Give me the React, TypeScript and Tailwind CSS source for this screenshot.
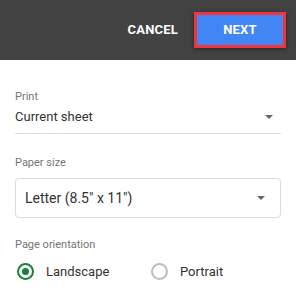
import React from "react";

function Caret() {
  return (
    <svg width="8" height="4" viewBox="0 0 8 4" className="shrink-0">
      <path d="M0 0h8L4 4z" fill="#666" />
    </svg>
  );
}

function Radio({ checked, label }: { checked: boolean; label: string }) {
  return (
    <div className="flex items-center">
      <div
        className={
          checked
            ? "flex h-[17px] w-[17px] items-center justify-center rounded-full border-2 border-[#188038]"
            : "h-[17px] w-[17px] rounded-full border-2 border-[#bdbdbd]"
        }
      >
        {checked && <div className="h-[7px] w-[7px] rounded-full bg-[#188038]" />}
      </div>
      <span className="ml-[12px] text-[13px] text-[#333]">{label}</span>
    </div>
  );
}

export default function App() {
  return (
    <div className="h-[293px] w-[296px] bg-white" style={{ fontFamily: "Roboto, Arial, sans-serif" }}>
      <div className="flex h-[60px] items-center justify-end bg-[#424242] pr-[10px]">
        <button className="mr-[16px] text-[13px] font-bold tracking-[0.2px] text-white">CANCEL</button>
        <div className="border-[3px] border-[#f0353d] shadow-[0_1px_4px_rgba(0,0,0,0.5)]">
          <button className="flex h-[30px] w-[86px] items-center justify-center bg-[#4285f4] text-[13px] font-bold tracking-[0.2px] text-white">
            NEXT
          </button>
        </div>
      </div>

      <div className="px-[15px]">
        <div className="mt-[30px] text-[11px] leading-[14px] text-[#757575]">Print</div>
        <div className="mt-[4px] flex items-center justify-between border-b border-[#dadce0] pb-[7px] pr-[8px]">
          <span className="text-[13px] leading-[18px] text-[#333]">Current sheet</span>
          <Caret />
        </div>

        <div className="mt-[22px] text-[11px] leading-[14px] text-[#757575]">Paper size</div>
        <div className="mt-[8px] flex h-[40px] items-center justify-between rounded-[4px] border border-[#dadce0] pl-[9px] pr-[15px]">
          <span className="text-[14px] text-[#333]">Letter (8.5" x 11")</span>
          <Caret />
        </div>

        <div className="mt-[20px] text-[11px] leading-[14px] text-[#757575]">Page orientation</div>
        <div className="mt-[10px] flex items-center pl-[2px]">
          <div className="w-[134px]">
            <Radio checked label="Landscape" />
          </div>
          <Radio checked={false} label="Portrait" />
        </div>
      </div>
    </div>
  );
}
